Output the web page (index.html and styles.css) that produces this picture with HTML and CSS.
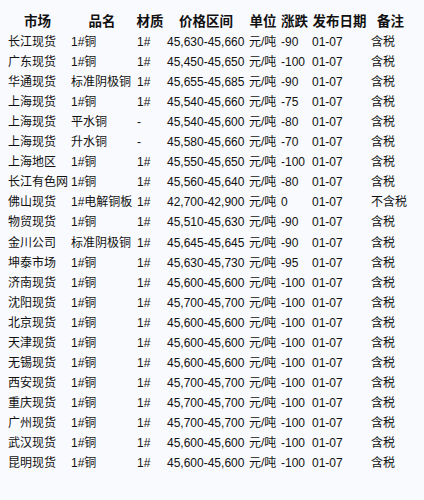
FILE: index.html
```html
<!DOCTYPE html>
<html lang="zh-CN">
<head>
<meta charset="utf-8">
<title>铜价行情</title>
<link rel="stylesheet" href="styles.css">
</head>
<body>
<div class="sheet">
  <div class="grid">
    <div class="h">市场</div><div class="h">品名</div><div class="h">材质</div><div class="h">价格区间</div><div class="h">单位</div><div class="h">涨跌</div><div class="h">发布日期</div><div class="h">备注</div>

    <div>长江现货</div><div>1#铜</div><div class="n">1#</div><div class="n">45,630-45,660</div><div>元/吨</div><div class="n">-90</div><div class="n">01-07</div><div>含税</div>
    <div>广东现货</div><div>1#铜</div><div class="n">1#</div><div class="n">45,450-45,650</div><div>元/吨</div><div class="n">-100</div><div class="n">01-07</div><div>含税</div>
    <div>华通现货</div><div>标准阴极铜</div><div class="n">1#</div><div class="n">45,655-45,685</div><div>元/吨</div><div class="n">-90</div><div class="n">01-07</div><div>含税</div>
    <div>上海现货</div><div>1#铜</div><div class="n">1#</div><div class="n">45,540-45,660</div><div>元/吨</div><div class="n">-75</div><div class="n">01-07</div><div>含税</div>
    <div>上海现货</div><div>平水铜</div><div class="n">-</div><div class="n">45,540-45,600</div><div>元/吨</div><div class="n">-80</div><div class="n">01-07</div><div>含税</div>
    <div>上海现货</div><div>升水铜</div><div class="n">-</div><div class="n">45,580-45,660</div><div>元/吨</div><div class="n">-70</div><div class="n">01-07</div><div>含税</div>
    <div>上海地区</div><div>1#铜</div><div class="n">1#</div><div class="n">45,550-45,650</div><div>元/吨</div><div class="n">-100</div><div class="n">01-07</div><div>含税</div>
    <div>长江有色网</div><div>1#铜</div><div class="n">1#</div><div class="n">45,560-45,640</div><div>元/吨</div><div class="n">-80</div><div class="n">01-07</div><div>含税</div>
    <div>佛山现货</div><div>1#电解铜板</div><div class="n">1#</div><div class="n">42,700-42,900</div><div>元/吨</div><div class="n">0</div><div class="n">01-07</div><div>不含税</div>
    <div>物贸现货</div><div>1#铜</div><div class="n">1#</div><div class="n">45,510-45,630</div><div>元/吨</div><div class="n">-90</div><div class="n">01-07</div><div>含税</div>
    <div>金川公司</div><div>标准阴极铜</div><div class="n">1#</div><div class="n">45,645-45,645</div><div>元/吨</div><div class="n">-90</div><div class="n">01-07</div><div>含税</div>
    <div>坤泰市场</div><div>1#铜</div><div class="n">1#</div><div class="n">45,630-45,730</div><div>元/吨</div><div class="n">-95</div><div class="n">01-07</div><div>含税</div>
    <div>济南现货</div><div>1#铜</div><div class="n">1#</div><div class="n">45,600-45,600</div><div>元/吨</div><div class="n">-100</div><div class="n">01-07</div><div>含税</div>
    <div>沈阳现货</div><div>1#铜</div><div class="n">1#</div><div class="n">45,700-45,700</div><div>元/吨</div><div class="n">-100</div><div class="n">01-07</div><div>含税</div>
    <div>北京现货</div><div>1#铜</div><div class="n">1#</div><div class="n">45,600-45,600</div><div>元/吨</div><div class="n">-100</div><div class="n">01-07</div><div>含税</div>
    <div>天津现货</div><div>1#铜</div><div class="n">1#</div><div class="n">45,600-45,600</div><div>元/吨</div><div class="n">-100</div><div class="n">01-07</div><div>含税</div>
    <div>无锡现货</div><div>1#铜</div><div class="n">1#</div><div class="n">45,600-45,600</div><div>元/吨</div><div class="n">-100</div><div class="n">01-07</div><div>含税</div>
    <div>西安现货</div><div>1#铜</div><div class="n">1#</div><div class="n">45,700-45,700</div><div>元/吨</div><div class="n">-100</div><div class="n">01-07</div><div>含税</div>
    <div>重庆现货</div><div>1#铜</div><div class="n">1#</div><div class="n">45,700-45,700</div><div>元/吨</div><div class="n">-100</div><div class="n">01-07</div><div>含税</div>
    <div>广州现货</div><div>1#铜</div><div class="n">1#</div><div class="n">45,700-45,700</div><div>元/吨</div><div class="n">-100</div><div class="n">01-07</div><div>含税</div>
    <div>武汉现货</div><div>1#铜</div><div class="n">1#</div><div class="n">45,600-45,600</div><div>元/吨</div><div class="n">-100</div><div class="n">01-07</div><div>含税</div>
    <div>昆明现货</div><div>1#铜</div><div class="n">1#</div><div class="n">45,600-45,600</div><div>元/吨</div><div class="n">-100</div><div class="n">01-07</div><div>含税</div>
  </div>
</div>
</body>
</html>
```

FILE: styles.css
```css
html, body {
  margin: 0;
  padding: 0;
  background: #f9fafd;
}

.sheet {
  padding: 12px 0 0 6px;
  color: #111;
  font-family: "Liberation Sans", "Noto Sans CJK SC", sans-serif;
  font-size: 12px;
}

.grid {
  display: grid;
  grid-template-columns: 63px 66px 30px 82px 32px 31px 59px 43px;
  grid-auto-rows: 20.06px;
  align-items: center;
}

.grid > div {
  padding-left: 2px;
  white-space: nowrap;
  line-height: 20px;
}

.grid > .h {
  padding-left: 0;
  text-align: center;
  font-weight: bold;
  font-size: 13.5px;
}

.grid > .n {
  font-size: 12px;
}
```
